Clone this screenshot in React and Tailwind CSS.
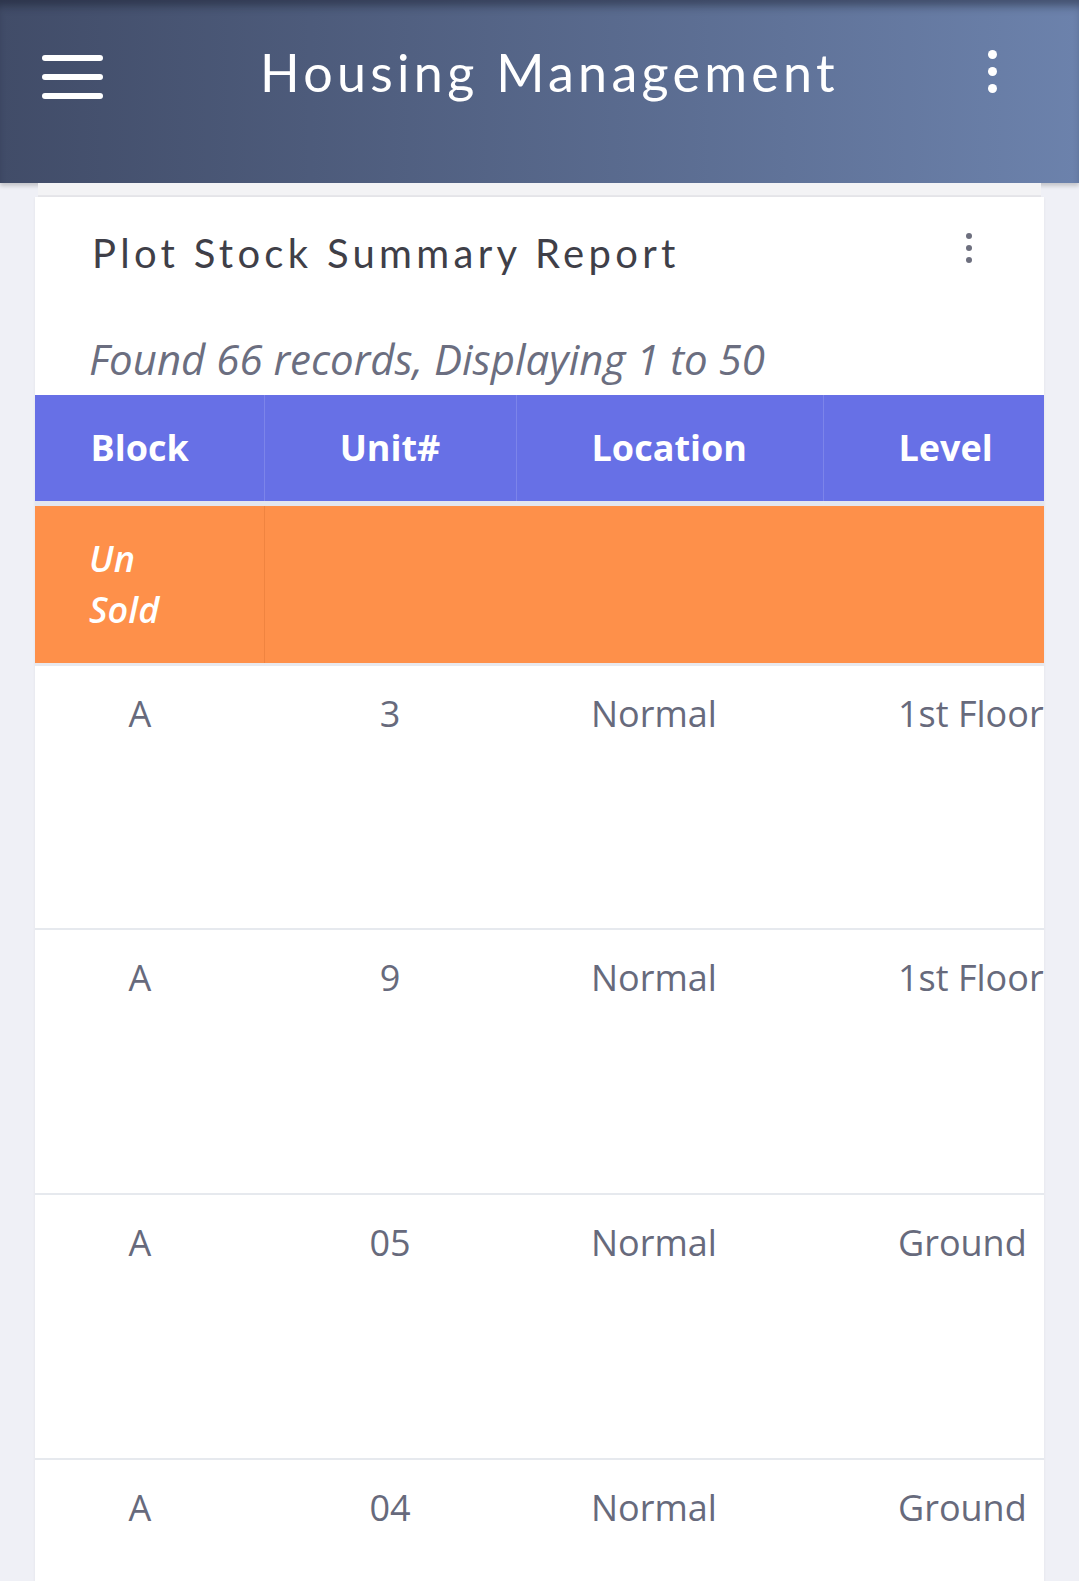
// Plot Stock Summary Report — mobile view of the housing management app.

const ROWS = [
  { block: 'A', unit: '3', location: 'Normal', level: '1st Floor' },
  { block: 'A', unit: '9', location: 'Normal', level: '1st Floor' },
  { block: 'A', unit: '05', location: 'Normal', level: 'Ground' },
  { block: 'A', unit: '04', location: 'Normal', level: 'Ground' },
];

function Kebab({ dot = 'h-[9px] w-[9px]', gap = 'gap-[8px]', color = 'bg-white' }) {
  return (
    <div className={`flex flex-col items-center ${gap}`}>
      <span className={`block rounded-full ${dot} ${color}`} />
      <span className={`block rounded-full ${dot} ${color}`} />
      <span className={`block rounded-full ${dot} ${color}`} />
    </div>
  );
}

export default function App() {
  return (
    <div className="min-h-screen bg-[#eff0f6] font-['Open_Sans',sans-serif]">
      {/* ── Top bar ──────────────────────────────────────────────────── */}
      <header className="flex h-[183px] items-start bg-gradient-to-r from-[#414c68] to-[#6c82ac] shadow-[inset_0_10px_8px_-4px_rgba(20,25,40,0.45),0_3px_4px_rgba(0,0,0,0.18)]">
        <div className="ml-[42px] mt-[55px] flex w-[61px] flex-col gap-[13px]">
          <span className="block h-[6px] rounded-full bg-white" />
          <span className="block h-[6px] rounded-full bg-white" />
          <span className="block h-[6px] rounded-full bg-white" />
        </div>
        <h1 className="ml-[157px] mt-[38px] font-['Lato',sans-serif] text-[52px] leading-[68px] tracking-[4.3px] text-white">
          Housing Management
        </h1>
        <div className="ml-auto mr-[82px] mt-[50px]">
          <Kebab />
        </div>
      </header>

      {/* ── Report card ──────────────────────────────────────────────── */}
      <div className="px-[35px]">
        <div className="mx-[3px] h-[14px] border-b-2 border-[#e6e6ea] bg-[#f3f3f5]" />
        <section className="overflow-hidden bg-white shadow-[0_1px_3px_rgba(0,0,0,0.06)]">
          <div className="flex items-start justify-between pl-[57px] pr-[72px] pt-[28px]">
            <h2 className="font-['Lato',sans-serif] text-[40px] leading-[56px] tracking-[4.3px] text-[#3f3f48]">
              Plot Stock Summary Report
            </h2>
            <div className="mt-[8px]">
              <Kebab dot="h-[6px] w-[6px]" gap="gap-[6px]" color="bg-[#6d6f7e]" />
            </div>
          </div>
          <p className="pb-[8px] pl-[54px] pt-[50px] text-[42px] italic leading-[56px] text-[#6b6e80]">
            Found 66 records, Displaying 1 to 50
          </p>

          <table className="w-[1032px] table-fixed border-collapse text-[36px]">
            <colgroup>
              <col className="w-[229px]" />
              <col className="w-[252px]" />
              <col className="w-[307px]" />
              <col className="w-[244px]" />
            </colgroup>
            <thead>
              <tr className="h-[108px] border-b-[5px] border-[#e3e6f0] bg-[#6770e6] font-bold text-white">
                <th className="pl-[55px] pr-[74px] text-center font-bold">Block</th>
                <th className="border-l border-[#7c84ea] text-center font-bold">Unit#</th>
                <th className="border-l border-[#7c84ea] pl-[75px] text-left font-bold">Location</th>
                <th className="border-l border-[#7c84ea] pl-[75px] text-left font-bold">Level</th>
              </tr>
            </thead>
            <tbody>
              <tr className="h-[161px] border-b-[3px] border-[#e8e9ee] bg-[#fe904a]">
                <td className="pl-[54px] pr-[74px] text-left font-semibold italic leading-[51px] text-white">
                  Un Sold
                </td>
                <td className="border-l border-[#f08440]" colSpan={3} />
              </tr>
              {ROWS.map((r, i) => (
                <tr key={i} className="h-[265px] border-b-2 border-[#e6e9ee] align-top leading-[51px] text-[#676a7c]">
                  <td className="pl-[55px] pr-[74px] pt-[22px] text-center">{r.block}</td>
                  <td className="pt-[22px] text-center">{r.unit}</td>
                  <td className="pl-[75px] pt-[22px] text-left">{r.location}</td>
                  <td className="whitespace-nowrap pl-[75px] pt-[22px] text-left">{r.level}</td>
                </tr>
              ))}
            </tbody>
          </table>
        </section>
      </div>
    </div>
  );
}
